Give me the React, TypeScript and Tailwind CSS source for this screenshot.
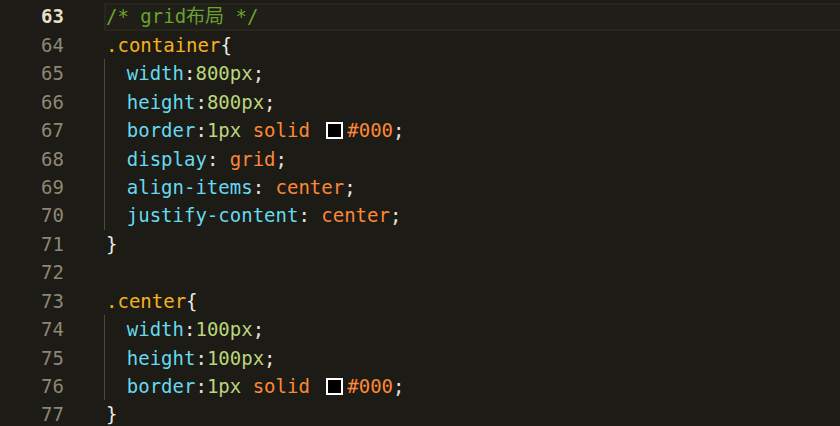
import React from "react";

type Tok = { t: string; c?: string; swatch?: boolean };

const C = {
  com: "text-[#6aa22f]",
  sel: "text-[#f6b21c]",
  brace: "text-[#ecebe4]",
  prop: "text-[#66d9ef]",
  num: "text-[#bcd57c]",
  val: "text-[#fd8736]",
  pun: "text-[#e6e4dc]",
};

const lines: { n: number; indent?: boolean; toks: Tok[]; current?: boolean }[] = [
  { n: 63, current: true, toks: [{ t: "/* grid布局 */", c: C.com }] },
  { n: 64, toks: [{ t: ".container", c: C.sel }, { t: "{", c: C.brace }] },
  { n: 65, indent: true, toks: [{ t: "width", c: C.prop }, { t: ":", c: C.pun }, { t: "800px", c: C.num }, { t: ";", c: C.pun }] },
  { n: 66, indent: true, toks: [{ t: "height", c: C.prop }, { t: ":", c: C.pun }, { t: "800px", c: C.num }, { t: ";", c: C.pun }] },
  {
    n: 67,
    indent: true,
    toks: [
      { t: "border", c: C.prop },
      { t: ":", c: C.pun },
      { t: "1px", c: C.num },
      { t: " solid ", c: C.val },
      { t: "", swatch: true },
      { t: "#000", c: C.val },
      { t: ";", c: C.pun },
    ],
  },
  { n: 68, indent: true, toks: [{ t: "display", c: C.prop }, { t: ": ", c: C.pun }, { t: "grid", c: C.val }, { t: ";", c: C.pun }] },
  { n: 69, indent: true, toks: [{ t: "align-items", c: C.prop }, { t: ": ", c: C.pun }, { t: "center", c: C.val }, { t: ";", c: C.pun }] },
  { n: 70, indent: true, toks: [{ t: "justify-content", c: C.prop }, { t: ": ", c: C.pun }, { t: "center", c: C.val }, { t: ";", c: C.pun }] },
  { n: 71, toks: [{ t: "}", c: C.brace }] },
  { n: 72, toks: [] },
  { n: 73, toks: [{ t: ".center", c: C.sel }, { t: "{", c: C.brace }] },
  { n: 74, indent: true, toks: [{ t: "width", c: C.prop }, { t: ":", c: C.pun }, { t: "100px", c: C.num }, { t: ";", c: C.pun }] },
  { n: 75, indent: true, toks: [{ t: "height", c: C.prop }, { t: ":", c: C.pun }, { t: "100px", c: C.num }, { t: ";", c: C.pun }] },
  {
    n: 76,
    indent: true,
    toks: [
      { t: "border", c: C.prop },
      { t: ":", c: C.pun },
      { t: "1px", c: C.num },
      { t: " solid ", c: C.val },
      { t: "", swatch: true },
      { t: "#000", c: C.val },
      { t: ";", c: C.pun },
    ],
  },
  { n: 77, toks: [{ t: "}", c: C.brace }] },
];

function Line({ line }: { line: (typeof lines)[number] }) {
  return (
    <div className="flex h-[28.43px] items-center">
      <div
        className={`w-[64px] shrink-0 text-right ${
          line.current ? "text-[#e9dfc6] font-bold" : "text-[#8d8774]"
        }`}
      >
        {line.n}
      </div>
      <div
        className={`ml-[40px] flex h-full flex-1 items-center ${
          line.current
            ? "border-y-2 border-l-2 border-[#28271e] bg-[#1f1e18]"
            : "pl-[2px]"
        }`}
      >
        {line.indent && (
          <span className="-ml-[2px] inline-block h-full w-[22.8px] border-l border-[#4b493e]" />
        )}
        {line.toks.map((tk, i) =>
          tk.swatch ? (
            <span
              key={i}
              className="ml-[5px] mr-[4px] inline-block h-[17px] w-[17px] border-2 border-white bg-black"
            />
          ) : (
            <span key={i} className={`whitespace-pre ${tk.c}`}>
              {tk.t}
            </span>
          )
        )}
      </div>
    </div>
  );
}

export default function App() {
  return (
    <div
      className="h-[426px] w-[840px] overflow-hidden bg-[#1c1b16] pt-[2.5px] text-[19px]"
      style={{ fontFamily: '"DejaVu Sans Mono", "Noto Sans CJK SC", monospace' }}
    >
      {lines.map((l) => (
        <Line key={l.n} line={l} />
      ))}
    </div>
  );
}
